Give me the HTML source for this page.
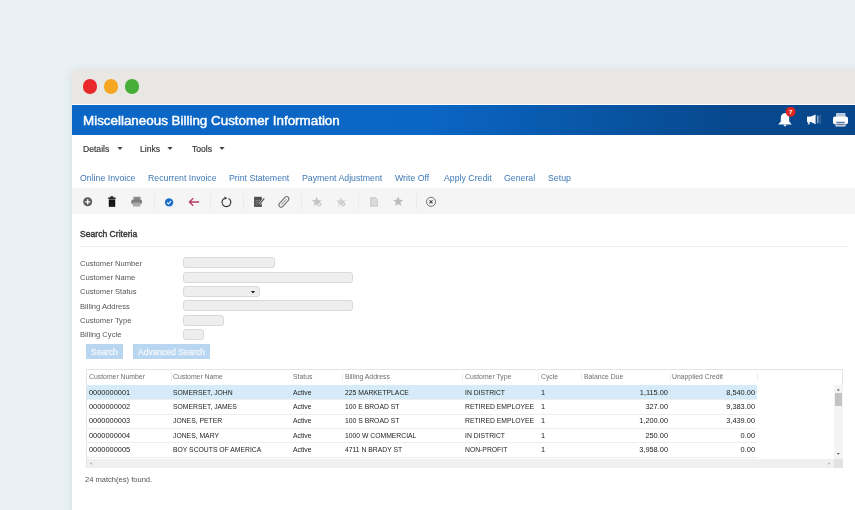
<!DOCTYPE html>
<html><head><meta charset="utf-8">
<style>
html,body{margin:0;padding:0;}
body{width:855px;height:510px;overflow:hidden;background:#eaf1f5;position:relative;font-family:"Liberation Sans", sans-serif;}
.a{position:absolute;white-space:nowrap;}
svg.a{overflow:visible;}
.t{will-change:transform;}
</style></head><body>
<div class="a" style="left:72px;top:69px;width:800px;height:460px;background:#ffffff;box-shadow:0 2px 10px 0px rgba(90,110,130,0.16);border-top-left-radius:5px;"></div>
<div class="a" style="left:72px;top:69px;width:800px;height:35px;background:#e9e7e3;border-top-left-radius:5px;"></div>
<div class="a" style="left:82.65px;top:79.15px;width:14.5px;height:14.5px;background:#e8282b;border-radius:50%;"></div>
<div class="a" style="left:103.55px;top:79.15px;width:14.5px;height:14.5px;background:#f5a623;border-radius:50%;"></div>
<div class="a" style="left:124.55000000000001px;top:79.15px;width:14.5px;height:14.5px;background:#45ae36;border-radius:50%;"></div>
<div class="a" style="left:72px;top:104.5px;width:800px;height:30.2px;background:linear-gradient(90deg,#0b67c7 0%,#0b65c4 45%,#0855a4 66%,#07488d 82%,#07468a 100%);"></div>
<div class="a t" style="left:82.50px;top:113px;font-size:13.4px;line-height:15px;color:#ffffff;-webkit-text-stroke:0.45px #fff;">Miscellaneous Billing Customer Information</div>
<svg class="a" style="left:770px;top:104px;" width="85" height="30" viewBox="0 0 85 30">
<path d="M15 9 c-2.6 0 -4.2 2.2 -4.2 5 v3.4 l-2.6 3 h13.6 l-2.6 -3 v-3.4 c0 -2.8 -1.6 -5 -4.2 -5z" fill="#fff"/>
<rect x="13.7" y="20.6" width="2.6" height="1.6" rx="0.8" fill="#e8eef5"/>
<circle cx="20.6" cy="7.8" r="4.9" fill="#e0261e"/>
<text x="20.6" y="10" font-size="6" font-family="Liberation Sans" font-weight="bold" fill="#fff" text-anchor="middle">7</text>
<rect x="37" y="12.6" width="4" height="5.4" fill="#fff"/>
<path d="M40.8 12.6 L45.6 10.4 V20.2 L40.8 18z" fill="#f4f7fb"/>
<rect x="37.8" y="17.8" width="2" height="2.6" fill="#d5dfea"/>
<rect x="47" y="11.6" width="1.6" height="7.6" fill="#88a3c6"/>
<rect x="49.6" y="10.8" width="1.3" height="9.2" fill="#3e679f"/>
<rect x="66" y="9" width="9.5" height="4" rx="0.6" fill="#b9c8da"/>
<rect x="63" y="12.6" width="15" height="7.6" rx="2" fill="#fff"/>
<rect x="65.5" y="17" width="10" height="5.6" rx="0.6" fill="#d5dee9"/>
<rect x="66.5" y="18.2" width="8" height="0.9" fill="#40628f"/>
<rect x="66.5" y="20.2" width="8" height="0.9" fill="#40628f"/>
</svg>
<div class="a t" style="left:82.50px;top:144px;font-size:8.6px;line-height:10px;color:#383838;-webkit-text-stroke:0.18px #383838;">Details</div>
<svg class="a" style="left:116.5px;top:146px;" width="6" height="5" viewBox="0 0 6 5"><path d="M0.4 1 h5.2 l-2.6 3z" fill="#444"/></svg>
<div class="a t" style="left:140.00px;top:144px;font-size:8.6px;line-height:10px;color:#383838;-webkit-text-stroke:0.18px #383838;">Links</div>
<svg class="a" style="left:166.6px;top:146px;" width="6" height="5" viewBox="0 0 6 5"><path d="M0.4 1 h5.2 l-2.6 3z" fill="#444"/></svg>
<div class="a t" style="left:191.50px;top:144px;font-size:8.6px;line-height:10px;color:#383838;-webkit-text-stroke:0.18px #383838;">Tools</div>
<svg class="a" style="left:218.6px;top:146px;" width="6" height="5" viewBox="0 0 6 5"><path d="M0.4 1 h5.2 l-2.6 3z" fill="#444"/></svg>
<div class="a t" style="left:80.20px;top:173px;font-size:8.75px;line-height:10px;color:#3f79b6;">Online Invoice</div>
<div class="a t" style="left:148.00px;top:173px;font-size:8.75px;line-height:10px;color:#3f79b6;">Recurrent Invoice</div>
<div class="a t" style="left:228.50px;top:173px;font-size:8.75px;line-height:10px;color:#3f79b6;">Print Statement</div>
<div class="a t" style="left:302.10px;top:173px;font-size:8.75px;line-height:10px;color:#3f79b6;">Payment Adjustment</div>
<div class="a t" style="left:395.40px;top:173px;font-size:8.75px;line-height:10px;color:#3f79b6;">Write Off</div>
<div class="a t" style="left:443.90px;top:173px;font-size:8.75px;line-height:10px;color:#3f79b6;">Apply Credit</div>
<div class="a t" style="left:503.80px;top:173px;font-size:8.75px;line-height:10px;color:#3f79b6;">General</div>
<div class="a t" style="left:548.00px;top:173px;font-size:8.75px;line-height:10px;color:#3f79b6;">Setup</div>
<div class="a" style="left:72px;top:188px;width:800px;height:26px;background:#f5f5f5;"></div>
<div class="a" style="left:154px;top:193px;width:1px;height:16px;background:#ebebeb;"></div>
<div class="a" style="left:210.4px;top:193px;width:1px;height:16px;background:#ebebeb;"></div>
<div class="a" style="left:243px;top:193px;width:1px;height:16px;background:#ebebeb;"></div>
<div class="a" style="left:300.6px;top:193px;width:1px;height:16px;background:#ebebeb;"></div>
<div class="a" style="left:357.8px;top:193px;width:1px;height:16px;background:#ebebeb;"></div>
<div class="a" style="left:415.8px;top:193px;width:1px;height:16px;background:#ebebeb;"></div>
<svg class="a" style="left:72px;top:188px;" width="380" height="26" viewBox="0 0 380 26">
<circle cx="15.7" cy="13.8" r="4.5" fill="#606060"/>
<path d="M15.7 11.3 v5 M13.2 13.8 h5" stroke="#fff" stroke-width="1.3"/>
<rect x="38.3" y="8.3" width="3" height="1.4" fill="#111"/>
<rect x="36.2" y="9.5" width="7.4" height="1.4" fill="#111"/>
<rect x="36.8" y="11.4" width="6.4" height="7.4" fill="#111"/>
<path d="M39 12.6 v5 M41 12.6 v5" stroke="#3a3a3a" stroke-width="0.5"/>
<rect x="61.5" y="8.8" width="7" height="3.4" rx="0.4" fill="#8c8c8c"/>
<rect x="59.3" y="11.4" width="10.7" height="4.8" rx="1.6" fill="#7e7e7e"/>
<rect x="61" y="14.6" width="7.3" height="4" rx="0.4" fill="#aaaaaa"/>
<circle cx="97.1" cy="14.4" r="4.2" fill="#1a6fcb"/>
<path d="M95.1 14.4 l1.4 1.4 l2.6 -2.7" stroke="#e6f3ff" stroke-width="1.2" fill="none"/>
<path d="M127.1 14 h-9.4 M121.2 10.2 l-3.8 3.8 l3.8 3.8" stroke="#b83d5f" stroke-width="1.3" fill="none"/>
<path d="M156.6 10.4 A4.4 4.4 0 1 1 152.2 10.4" stroke="#333" stroke-width="1.15" fill="none"/>
<path d="M152.4 8.4 l2.9 1.8 l-2.9 1.6z" fill="#333"/>
<rect x="182.1" y="8.8" width="7.7" height="10.1" fill="#4d4d4d"/>
<path d="M183.5 12.3 h4.6 M183.5 14.2 h3.2 M183.5 16.2 h3.2" stroke="#a9a9a9" stroke-width="0.6"/>
<path d="M192.3 10.4 l-4.6 5.6" stroke="#f5f5f5" stroke-width="2.4"/>
<path d="M192.3 10.4 l-4.6 5.6" stroke="#555" stroke-width="1.2"/>
<g transform="rotate(-48 211.9 13.85)"><rect x="205.6" y="11.6" width="12.6" height="4.5" rx="2.25" fill="none" stroke="#6a6a6a" stroke-width="1"/><path d="M208 13.85 h7.5" stroke="#6a6a6a" stroke-width="0.8"/></g>
<path d="M244.70,8.70 L246.08,12.01 L249.65,12.29 L246.93,14.62 L247.76,18.11 L244.70,16.24 L241.64,18.11 L242.47,14.62 L239.75,12.29 L243.32,12.01z" fill="#c4c4c4"/>
<circle cx="247.2" cy="16.3" r="1.7" fill="#f0f0f0" stroke="#a9a9a9" stroke-width="0.7"/>
<path d="M269.00,9.10 L270.32,12.28 L273.76,12.55 L271.14,14.80 L271.94,18.15 L269.00,16.35 L266.06,18.15 L266.86,14.80 L264.24,12.55 L267.68,12.28z" fill="#d3d3d3"/>
<circle cx="271.3" cy="16.2" r="1.6" fill="#f0f0f0" stroke="#ababab" stroke-width="0.7"/>
<path d="M298 8.9 h5.2 l2.7 2.4 v7.4 h-7.9z" fill="#d0d0d0"/>
<path d="M299.3 11.9 h5.3 M299.3 13.9 h5.3 M299.3 15.9 h5.3" stroke="#f2f2f2" stroke-width="0.6"/>
<path d="M326.20,8.40 L327.60,11.77 L331.24,12.06 L328.47,14.44 L329.32,17.99 L326.20,16.09 L323.08,17.99 L323.93,14.44 L321.16,12.06 L324.80,11.77z" fill="#bcbcbc"/>
<circle cx="359" cy="13.8" r="4.5" fill="none" stroke="#5a5a5a" stroke-width="0.85"/>
<path d="M357.5 12.3 l3 3 M360.5 12.3 l-3 3" stroke="#444" stroke-width="1.1"/>
</svg>
<div class="a t" style="left:79.80px;top:229px;font-size:8.6px;line-height:10px;color:#383838;-webkit-text-stroke:0.4px #383838;">Search Criteria</div>
<div class="a" style="left:80px;top:245.5px;width:768px;height:1px;background:#ededed;"></div>
<div class="a t" style="left:79.80px;top:259px;font-size:7.6px;line-height:9px;color:#555;">Customer Number</div>
<div class="a t" style="left:79.80px;top:273px;font-size:7.6px;line-height:9px;color:#555;">Customer Name</div>
<div class="a t" style="left:79.80px;top:287px;font-size:7.6px;line-height:9px;color:#555;">Customer Status</div>
<div class="a t" style="left:79.80px;top:302px;font-size:7.6px;line-height:9px;color:#555;">Billing Address</div>
<div class="a t" style="left:79.80px;top:316px;font-size:7.6px;line-height:9px;color:#555;">Customer Type</div>
<div class="a t" style="left:79.80px;top:330px;font-size:7.6px;line-height:9px;color:#555;">Billing Cycle</div>
<div class="a" style="left:182.6px;top:257.3px;width:92.7px;height:11px;background:#eeeeee;border:1px solid #d9d9d9;border-radius:3px;box-sizing:border-box;"></div>
<div class="a" style="left:182.6px;top:271.5px;width:170.3px;height:11px;background:#eeeeee;border:1px solid #d9d9d9;border-radius:3px;box-sizing:border-box;"></div>
<div class="a" style="left:182.6px;top:286.1px;width:77.7px;height:11px;background:#eeeeee;border:1px solid #d9d9d9;border-radius:3px;box-sizing:border-box;"></div>
<div class="a" style="left:182.6px;top:300.4px;width:170.3px;height:11px;background:#eeeeee;border:1px solid #d9d9d9;border-radius:3px;box-sizing:border-box;"></div>
<div class="a" style="left:182.6px;top:314.6px;width:41.4px;height:11px;background:#eeeeee;border:1px solid #d9d9d9;border-radius:3px;box-sizing:border-box;"></div>
<div class="a" style="left:182.6px;top:328.8px;width:21.7px;height:11px;background:#eeeeee;border:1px solid #d9d9d9;border-radius:3px;box-sizing:border-box;"></div>
<svg class="a" style="left:250px;top:289.5px;" width="6" height="5" viewBox="0 0 6 5"><path d="M0.8 1 h4.4 l-2.2 2.6z" fill="#222"/></svg>
<div class="a" style="left:86.4px;top:344px;width:36.6px;height:14.5px;background:#b9d6f0;"></div>
<div class="a" style="left:132.9px;top:344px;width:76.8px;height:14.5px;background:#b9d6f0;"></div>
<div class="a t" style="left:91.00px;top:347px;font-size:8.45px;line-height:10px;color:#f2f7fc;-webkit-text-stroke:0.25px #f2f7fc;">Search</div>
<div class="a t" style="left:138.20px;top:347px;font-size:8.5px;line-height:10px;color:#f2f7fc;-webkit-text-stroke:0.25px #f2f7fc;">Advanced Search</div>
<div class="a" style="left:86px;top:369px;width:757px;height:99px;background:#fff;border:1px solid #e4e4e4;box-sizing:border-box;"></div>
<div class="a" style="left:170.5px;top:373px;width:1px;height:8px;background:#ebebeb;"></div>
<div class="a" style="left:341.6px;top:373px;width:1px;height:8px;background:#ebebeb;"></div>
<div class="a" style="left:461.7px;top:373px;width:1px;height:8px;background:#ebebeb;"></div>
<div class="a" style="left:537.5px;top:373px;width:1px;height:8px;background:#ebebeb;"></div>
<div class="a" style="left:580.5px;top:373px;width:1px;height:8px;background:#ebebeb;"></div>
<div class="a" style="left:669.5px;top:373px;width:1px;height:8px;background:#ebebeb;"></div>
<div class="a" style="left:757px;top:373px;width:1px;height:8px;background:#ebebeb;"></div>
<div class="a t" style="left:89.00px;top:373px;font-size:6.85px;line-height:7px;color:#6e6e6e;">Customer Number</div>
<div class="a t" style="left:172.60px;top:373px;font-size:6.85px;line-height:7px;color:#6e6e6e;">Customer Name</div>
<div class="a t" style="left:293.00px;top:373px;font-size:6.85px;line-height:7px;color:#6e6e6e;">Status</div>
<div class="a t" style="left:344.50px;top:373px;font-size:6.85px;line-height:7px;color:#6e6e6e;">Billing Address</div>
<div class="a t" style="left:465.00px;top:373px;font-size:6.85px;line-height:7px;color:#6e6e6e;">Customer Type</div>
<div class="a t" style="left:541.00px;top:373px;font-size:6.85px;line-height:7px;color:#6e6e6e;">Cycle</div>
<div class="a t" style="left:584.00px;top:373px;font-size:6.85px;line-height:7px;color:#6e6e6e;">Balance Due</div>
<div class="a t" style="left:672.00px;top:373px;font-size:6.85px;line-height:7px;color:#6e6e6e;">Unapplied Credit</div>
<div class="a" style="left:87px;top:385px;width:670px;height:14.3px;background:#d5ebf9;"></div>
<div class="a t" style="left:89.00px;top:388px;font-size:7.4px;line-height:9px;color:#222;">0000000001</div>
<div class="a t" style="left:172.60px;top:389px;font-size:6.8px;line-height:7px;color:#222;">SOMERSET, JOHN</div>
<div class="a t" style="left:293.00px;top:389px;font-size:6.8px;line-height:7px;color:#222;">Active</div>
<div class="a t" style="left:344.50px;top:389px;font-size:6.8px;line-height:7px;color:#222;">225 MARKETPLACE</div>
<div class="a t" style="left:465.00px;top:389px;font-size:6.8px;line-height:7px;color:#222;">IN DISTRICT</div>
<div class="a t" style="left:541.00px;top:388px;font-size:7.4px;line-height:9px;color:#222;">1</div>
<div class="a t" style="left:597.60px;width:70px;text-align:right;top:388px;font-size:7.4px;line-height:9px;color:#222;">1,115.00</div>
<div class="a t" style="left:685.40px;width:70px;text-align:right;top:388px;font-size:7.4px;line-height:9px;color:#222;">8,540.00</div>
<div class="a" style="left:87px;top:399.3px;width:670px;height:1px;background:#eeeeee;"></div>
<div class="a t" style="left:89.00px;top:402px;font-size:7.4px;line-height:9px;color:#222;">0000000002</div>
<div class="a t" style="left:172.60px;top:403px;font-size:6.8px;line-height:7px;color:#222;">SOMERSET, JAMES</div>
<div class="a t" style="left:293.00px;top:403px;font-size:6.8px;line-height:7px;color:#222;">Active</div>
<div class="a t" style="left:344.50px;top:403px;font-size:6.8px;line-height:7px;color:#222;">100 E BROAD ST</div>
<div class="a t" style="left:465.00px;top:403px;font-size:6.8px;line-height:7px;color:#222;">RETIRED EMPLOYEE</div>
<div class="a t" style="left:541.00px;top:402px;font-size:7.4px;line-height:9px;color:#222;">1</div>
<div class="a t" style="left:597.60px;width:70px;text-align:right;top:402px;font-size:7.4px;line-height:9px;color:#222;">327.00</div>
<div class="a t" style="left:685.40px;width:70px;text-align:right;top:402px;font-size:7.4px;line-height:9px;color:#222;">9,383.00</div>
<div class="a" style="left:87px;top:413.6px;width:670px;height:1px;background:#eeeeee;"></div>
<div class="a t" style="left:89.00px;top:416px;font-size:7.4px;line-height:9px;color:#222;">0000000003</div>
<div class="a t" style="left:172.60px;top:417px;font-size:6.8px;line-height:7px;color:#222;">JONES, PETER</div>
<div class="a t" style="left:293.00px;top:417px;font-size:6.8px;line-height:7px;color:#222;">Active</div>
<div class="a t" style="left:344.50px;top:417px;font-size:6.8px;line-height:7px;color:#222;">100 S BROAD ST</div>
<div class="a t" style="left:465.00px;top:417px;font-size:6.8px;line-height:7px;color:#222;">RETIRED EMPLOYEE</div>
<div class="a t" style="left:541.00px;top:416px;font-size:7.4px;line-height:9px;color:#222;">1</div>
<div class="a t" style="left:597.60px;width:70px;text-align:right;top:416px;font-size:7.4px;line-height:9px;color:#222;">1,200.00</div>
<div class="a t" style="left:685.40px;width:70px;text-align:right;top:416px;font-size:7.4px;line-height:9px;color:#222;">3,439.00</div>
<div class="a" style="left:87px;top:427.9px;width:670px;height:1px;background:#eeeeee;"></div>
<div class="a t" style="left:89.00px;top:431px;font-size:7.4px;line-height:9px;color:#222;">0000000004</div>
<div class="a t" style="left:172.60px;top:432px;font-size:6.8px;line-height:7px;color:#222;">JONES, MARY</div>
<div class="a t" style="left:293.00px;top:432px;font-size:6.8px;line-height:7px;color:#222;">Active</div>
<div class="a t" style="left:344.50px;top:432px;font-size:6.8px;line-height:7px;color:#222;">1000 W COMMERCIAL</div>
<div class="a t" style="left:465.00px;top:432px;font-size:6.8px;line-height:7px;color:#222;">IN DISTRICT</div>
<div class="a t" style="left:541.00px;top:431px;font-size:7.4px;line-height:9px;color:#222;">1</div>
<div class="a t" style="left:597.60px;width:70px;text-align:right;top:431px;font-size:7.4px;line-height:9px;color:#222;">250.00</div>
<div class="a t" style="left:685.40px;width:70px;text-align:right;top:431px;font-size:7.4px;line-height:9px;color:#222;">0.00</div>
<div class="a" style="left:87px;top:442.2px;width:670px;height:1px;background:#eeeeee;"></div>
<div class="a t" style="left:89.00px;top:445px;font-size:7.4px;line-height:9px;color:#222;">0000000005</div>
<div class="a t" style="left:172.60px;top:446px;font-size:6.8px;line-height:7px;color:#222;">BOY SCOUTS OF AMERICA</div>
<div class="a t" style="left:293.00px;top:446px;font-size:6.8px;line-height:7px;color:#222;">Active</div>
<div class="a t" style="left:344.50px;top:446px;font-size:6.8px;line-height:7px;color:#222;">4711 N BRADY ST</div>
<div class="a t" style="left:465.00px;top:446px;font-size:6.8px;line-height:7px;color:#222;">NON-PROFIT</div>
<div class="a t" style="left:541.00px;top:445px;font-size:7.4px;line-height:9px;color:#222;">1</div>
<div class="a t" style="left:597.60px;width:70px;text-align:right;top:445px;font-size:7.4px;line-height:9px;color:#222;">3,958.00</div>
<div class="a t" style="left:685.40px;width:70px;text-align:right;top:445px;font-size:7.4px;line-height:9px;color:#222;">0.00</div>
<div class="a" style="left:87px;top:456.5px;width:670px;height:1px;background:#eeeeee;"></div>
<div class="a" style="left:834px;top:385px;width:8.5px;height:74px;background:#f4f4f4;"></div>
<div class="a" style="left:835px;top:393.1px;width:6.6px;height:13.2px;background:#c3c3c3;"></div>
<svg class="a" style="left:834px;top:386px;" width="9" height="72" viewBox="0 0 9 72"><path d="M2.8 4.6 h3 l-1.5 -1.8z M2.8 67 h3 l-1.5 1.8z" fill="#555"/></svg>
<div class="a" style="left:87px;top:459.2px;width:747px;height:8.4px;background:#f0f0f0;"></div>
<div class="a" style="left:833.6px;top:459.2px;width:9px;height:8.4px;background:#e2e2e2;"></div>
<svg class="a" style="left:87px;top:459px;" width="748" height="9" viewBox="0 0 748 9"><path d="M4.8 3.2 v2.6 l-1.6 -1.3z M741.5 3.2 v2.6 l1.6 -1.3z" fill="#999"/></svg>
<div class="a t" style="left:84.70px;top:475px;font-size:7.55px;line-height:9px;color:#555;">24 match(es) found.</div>
</body></html>
